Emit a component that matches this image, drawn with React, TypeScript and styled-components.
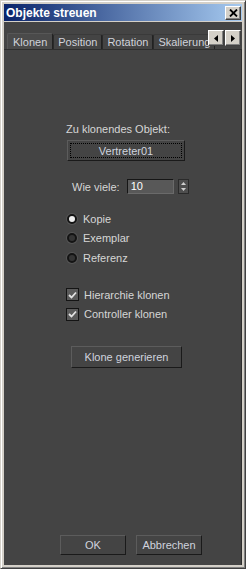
import styled, { createGlobalStyle } from "styled-components";

const GlobalStyle = createGlobalStyle`
  html, body {
    margin: 0;
    padding: 0;
    background: #d4d0c8;
  }
  * {
    box-sizing: border-box;
  }
`;

const Window = styled.div`
  width: 246px;
  height: 569px;
  display: flex;
  flex-direction: column;
  background: #d4d0c8;
  border-top: 1px solid #d4d0c8;
  border-left: 1px solid #d4d0c8;
  border-right: 1px solid #404040;
  border-bottom: 1px solid #404040;
  box-shadow: inset 1px 1px 0 #ffffff, inset -1px -1px 0 #808080;
  padding: 3px;
  font-family: Tahoma, "Liberation Sans", "DejaVu Sans", sans-serif;
  font-size: 11px;
`;

const TitleBar = styled.div`
  height: 17px;
  display: flex;
  align-items: center;
  justify-content: space-between;
  padding: 0 1px 0 2px;
  background: linear-gradient(to right, #0a246a, #a6caf0);
  color: #ffffff;
  font-weight: bold;
  font-size: 12px;
`;

const CloseButton = styled.div`
  width: 16px;
  height: 14px;
  background: #d4d0c8;
  border-top: 1px solid #ffffff;
  border-left: 1px solid #ffffff;
  border-right: 1px solid #404040;
  border-bottom: 1px solid #404040;
  box-shadow: inset -1px -1px 0 #808080;
  display: flex;
  align-items: center;
  justify-content: center;
`;

const Body = styled.div`
  flex: 1;
  margin-top: 1px;
  background: #444444;
  display: flex;
  flex-direction: column;
  padding-top: 8px;
  color: #d6d6d6;
`;

const TabStrip = styled.div`
  display: flex;
  align-items: flex-end;
  height: 19px;
  padding-left: 3px;
  position: relative;
`;

const Tab = styled.div<{ $active?: boolean }>`
  height: ${(p) => (p.$active ? 16 : 15)}px;
  padding: 0 ${(p) => (p.$active ? 5 : 4)}px;
  display: flex;
  align-items: center;
  border-left: 1px solid ${(p) => (p.$active ? "#575757" : "#2a2a2a")};
  border-top: 1px solid ${(p) => (p.$active ? "#575757" : "#3a3a3a")};
  border-right: 1px solid #222222;
  border-radius: 2px 2px 0 0;
  background: ${(p) => (p.$active ? "#4a4a4a" : "#444444")};
  color: #d0d2da;
  white-space: nowrap;
  overflow: hidden;
`;

const TabScroller = styled.div`
  position: absolute;
  right: 1px;
  top: 0;
  display: flex;
  gap: 1px;
`;

const ScrollButton = styled.div`
  width: 16px;
  height: 16px;
  background: #d4d0c8;
  border-top: 1px solid #ffffff;
  border-left: 1px solid #ffffff;
  border-right: 1px solid #404040;
  border-bottom: 1px solid #404040;
  box-shadow: inset -1px -1px 0 #808080;
  display: flex;
  align-items: center;
  justify-content: center;
`;

const Panel = styled.div`
  flex: 1;
  border-top: 1px solid #2e2e2e;
  border-right: 1px solid #2e2e2e;
  display: flex;
  flex-direction: column;
  align-items: flex-start;
  padding-top: 72px;
`;

const Label = styled.div<{ $indent?: number }>`
  height: 14px;
  line-height: 14px;
  margin-left: ${(p) => p.$indent ?? 0}px;
  white-space: nowrap;
`;

const Spacer = styled.div<{ $h: number }>`
  height: ${(p) => p.$h}px;
  flex-shrink: 0;
`;

const Button = styled.div<{ $width: number; $height?: number; $indent?: number; $focus?: boolean }>`
  width: ${(p) => p.$width}px;
  height: ${(p) => p.$height ?? 21}px;
  margin-left: ${(p) => p.$indent ?? 0}px;
  background: #444444;
  border-top: 1px solid #5c5c5c;
  border-left: 1px solid #5c5c5c;
  border-right: 1px solid #1a1a1a;
  border-bottom: 1px solid #1a1a1a;
  display: flex;
  align-items: center;
  justify-content: center;
  color: #cfd3de;
  position: relative;
  ${(p) =>
    p.$focus &&
    `
    &::after {
      content: "";
      position: absolute;
      inset: 2px;
      border: 1px dotted #000000;
    }
  `}
`;

const SpinnerRow = styled.div`
  display: flex;
  align-items: center;
  margin-left: 68px;
  height: 15px;
`;

const NumberField = styled.div`
  width: 47px;
  height: 15px;
  margin-left: 7px;
  background: #585858;
  border-top: 1px solid #161616;
  border-left: 1px solid #161616;
  border-right: 1px solid #6a6a6a;
  border-bottom: 1px solid #6a6a6a;
  color: #ffffff;
  padding-left: 3px;
  line-height: 13px;
`;

const SpinButtons = styled.div`
  display: flex;
  flex-direction: column;
  width: 11px;
  height: 15px;
  margin-left: 4px;
  border: 1px solid #2a2a2a;
  background: #4e4e4e;
  align-items: center;
  justify-content: space-around;
`;

const OptionGroup = styled.div`
  display: flex;
  flex-direction: column;
  gap: 6.5px;
  margin-left: 63px;
`;

const Option = styled.div`
  display: flex;
  align-items: center;
  height: 13px;
  white-space: nowrap;
`;

const Radio = styled.div<{ $checked?: boolean }>`
  width: 10px;
  height: 10px;
  margin-right: 6px;
  border-radius: 50%;
  background: ${(p) => (p.$checked ? "#eeeeee" : "#353535")};
  border: 2px solid #141414;
  box-shadow: 0 0 0 1px #555555;
`;

const CheckBox = styled.div`
  width: 13px;
  height: 13px;
  margin-left: -1px;
  margin-right: 5px;
  background: #5a5a5a;
  border: 1px solid #141414;
  display: flex;
  align-items: center;
  justify-content: center;
`;

const Footer = styled.div`
  margin-top: auto;
  margin-bottom: 10px;
  margin-left: 56px;
  display: flex;
  gap: 10px;
`;

const Triangle = ({ dir }: { dir: "left" | "right" }) => (
  <svg width="4" height="7" viewBox="0 0 4 7">
    <path d={dir === "left" ? "M4 0 L0 3.5 L4 7 Z" : "M0 0 L4 3.5 L0 7 Z"} fill="#000" />
  </svg>
);

const Check = () => (
  <svg width="9" height="8" viewBox="0 0 9 8">
    <path d="M1 4 L3.5 6.5 L8 1.5" stroke="#e4e4e4" strokeWidth="1.8" fill="none" />
  </svg>
);

const App = () => {
  return (
    <>
      <GlobalStyle />
      <Window>
        <TitleBar>
          <span>Objekte streuen</span>
          <CloseButton>
            <svg width="9" height="8" viewBox="0 0 9 8">
              <path d="M1 0.5 L8 7.5 M8 0.5 L1 7.5" stroke="#000" strokeWidth="1.8" />
            </svg>
          </CloseButton>
        </TitleBar>
        <Body>
          <TabStrip>
            <Tab $active>Klonen</Tab>
            <Tab>Position</Tab>
            <Tab>Rotation</Tab>
            <Tab>Skalierung</Tab>
            <TabScroller>
              <ScrollButton>
                <Triangle dir="left" />
              </ScrollButton>
              <ScrollButton>
                <Triangle dir="right" />
              </ScrollButton>
            </TabScroller>
          </TabStrip>
          <Panel>
            <Label $indent={62}>Zu klonendes Objekt:</Label>
            <Spacer $h={4} />
            <Button $width={118} $indent={63} $focus>
              Vertreter01
            </Button>
            <Spacer $h={18} />
            <SpinnerRow>
              <Label>Wie viele:</Label>
              <NumberField>10</NumberField>
              <SpinButtons>
                <svg width="5" height="3" viewBox="0 0 5 3">
                  <path d="M2.5 0 L5 3 L0 3 Z" fill="#cfcfcf" />
                </svg>
                <svg width="5" height="3" viewBox="0 0 5 3">
                  <path d="M0 0 L5 0 L2.5 3 Z" fill="#cfcfcf" />
                </svg>
              </SpinButtons>
            </SpinnerRow>
            <Spacer $h={18} />
            <OptionGroup>
              <Option>
                <Radio $checked />
                Kopie
              </Option>
              <Option>
                <Radio />
                Exemplar
              </Option>
              <Option>
                <Radio />
                Referenz
              </Option>
            </OptionGroup>
            <Spacer $h={24} />
            <OptionGroup>
              <Option>
                <CheckBox>
                  <Check />
                </CheckBox>
                Hierarchie klonen
              </Option>
              <Option>
                <CheckBox>
                  <Check />
                </CheckBox>
                Controller klonen
              </Option>
            </OptionGroup>
            <Spacer $h={25} />
            <Button $width={111} $height={22} $indent={67}>
              Klone generieren
            </Button>
            <Footer>
              <Button $width={66} $height={20}>
                OK
              </Button>
              <Button $width={66} $height={20}>
                Abbrechen
              </Button>
            </Footer>
          </Panel>
        </Body>
      </Window>
    </>
  );
};

export default App;
